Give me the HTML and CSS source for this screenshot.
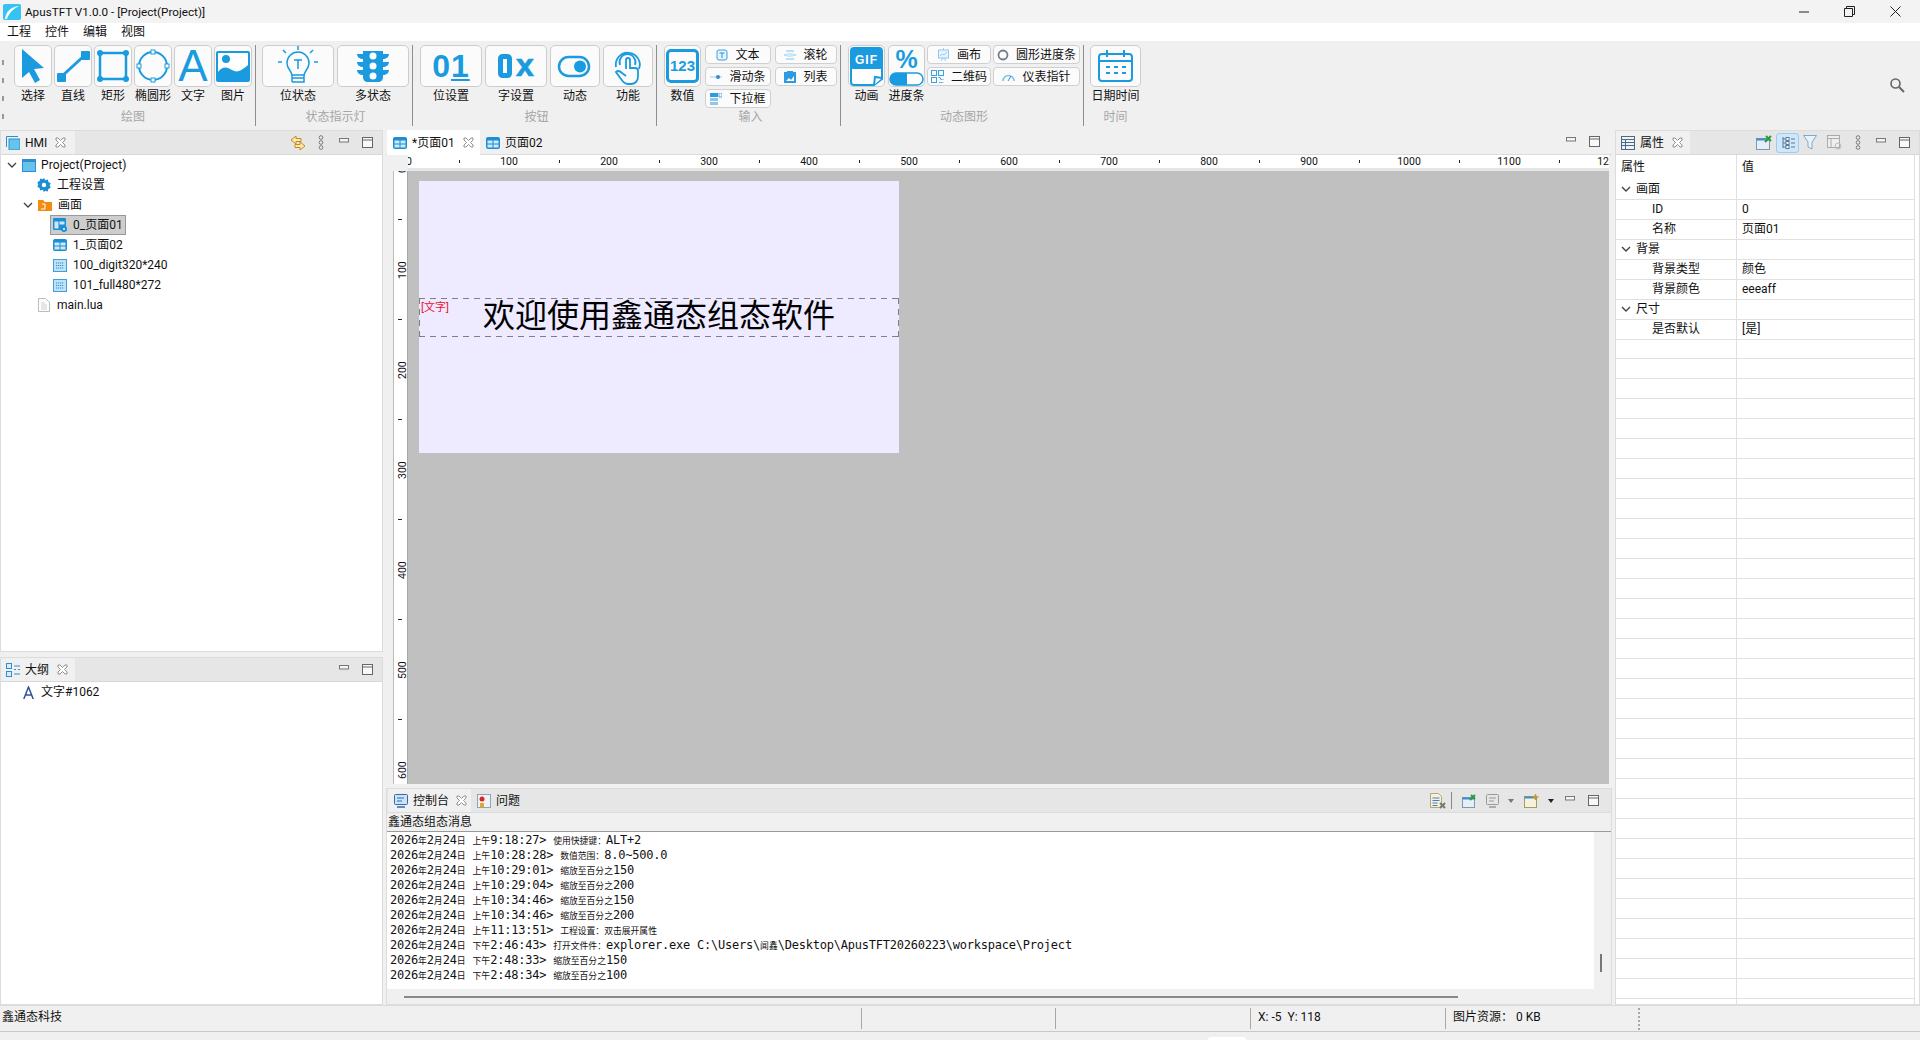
FILE: index.html
```html
<!DOCTYPE html>
<html lang="zh-CN">
<head>
<meta charset="utf-8">
<title>ApusTFT V1.0.0 - [Project(Project)]</title>
<link rel="stylesheet" href="styles.css">
</head>
<body>
<svg class="sprite" width="0" height="0">
  <symbol id="i-page" viewBox="0 0 14 12"><rect x="0" y="0" width="14" height="12" rx="2" fill="#1a8fd6"/><rect x="1.5" y="3.5" width="5" height="3" fill="#cfe8f8"/><rect x="7.5" y="3.5" width="5" height="3" fill="#cfe8f8"/><rect x="1.5" y="7.5" width="5" height="3" fill="#cfe8f8"/><rect x="7.5" y="7.5" width="5" height="3" fill="#cfe8f8"/></symbol>
  <symbol id="i-grid" viewBox="0 0 14 13"><rect x=".5" y=".5" width="13" height="12" fill="#bfe2f6" stroke="#3aa0e0"/><path d="M3 4h8M3 6.5h8M3 9h8" stroke="#2d8fd0" stroke-dasharray="1.2 .8"/></symbol>
  <symbol id="i-close" viewBox="0 0 11 11"><path d="M1 1h2l2.5 2.5L8 1h2v2L7.5 5.5 10 8v2H8L5.500 7.500 3 10H1V8l2.500-2.500L1 3z" fill="#fff" stroke="#909090"/></symbol>
  <symbol id="i-min" viewBox="0 0 10 5"><rect x=".5" y=".5" width="9" height="3.500" fill="#f4f4f4" stroke="#777"/></symbol>
  <symbol id="i-max" viewBox="0 0 11 11"><rect x=".5" y=".5" width="10" height="10" fill="#f8f8f8" stroke="#666"/><path d="M0 3h11" stroke="#666"/></symbol>
  <symbol id="i-dots" viewBox="0 0 6 15"><circle cx="3" cy="2.500" r="1.800" fill="#eee" stroke="#777"/><circle cx="3" cy="7.500" r="1.800" fill="#eee" stroke="#777"/><circle cx="3" cy="12.500" r="1.800" fill="#eee" stroke="#777"/></symbol>
  <symbol id="i-chev" viewBox="0 0 10 6"><path d="M1 1l4 4 4-4" fill="none" stroke="#444" stroke-width="1.400"/></symbol>
</svg>

<div class="titlebar">
  <svg class="applogo" width="18" height="16" viewBox="0 0 18 16"><rect width="18" height="16" rx="2" fill="#35c3f3"/><path d="M2 15C3 8 7 3 16 2 10 5 6 9 4 15z" fill="#fff"/></svg>
  <span class="apptitle">ApusTFT V1.0.0 - [Project(Project)]</span>
  <div class="winctl">
    <svg width="10" height="10" viewBox="0 0 10 10"><path d="M0 5h10" stroke="#222"/></svg>
    <svg width="11" height="11" viewBox="0 0 11 11"><path d="M.5 2.500h8v8h-8zM2.500 2.500v-2h8v8h-2" fill="none" stroke="#222"/></svg>
    <svg width="11" height="11" viewBox="0 0 11 11"><path d="M.5.5l10 10M10.500.5l-10 10" stroke="#222"/></svg>
  </div>
</div>

<div class="menubar"><span>工程</span><span>控件</span><span>编辑</span><span>视图</span></div>

<div class="toolbar">
  <div class="grip"><i></i><i></i><i></i><i></i></div>

  <section class="grp g1">
    <div class="items">
      <div class="tool w38"><div class="tbtn"><svg width="38" height="42" viewBox="0 0 38 42"><path d="M8 4V33l7-6 6 11 5-3-6-11 10-1z" fill="#1a9be0"/></svg></div><span>选择</span></div>
      <div class="tool w38"><div class="tbtn"><svg width="38" height="42" viewBox="0 0 38 42"><path d="M7 32L31 10" stroke="#1a9be0" stroke-width="3"/><rect x="3" y="28" width="9" height="9" rx="1" fill="#1a9be0"/><rect x="27" y="6" width="9" height="9" rx="1" fill="#1a9be0"/></svg></div><span>直线</span></div>
      <div class="tool w38"><div class="tbtn"><svg width="38" height="42" viewBox="0 0 38 42"><rect x="6" y="8" width="26" height="26" fill="none" stroke="#1a9be0" stroke-width="2.500"/><g fill="#1a9be0"><circle cx="6" cy="8" r="3"/><circle cx="32" cy="8" r="3"/><circle cx="6" cy="34" r="3"/><circle cx="32" cy="34" r="3"/></g></svg></div><span>矩形</span></div>
      <div class="tool w38"><div class="tbtn"><svg width="38" height="42" viewBox="0 0 38 42"><ellipse cx="19" cy="21" rx="14" ry="14" fill="none" stroke="#1a9be0" stroke-width="2"/><g fill="#fff" stroke="#1a9be0"><rect x="17" y="5" width="4" height="4"/><rect x="17" y="33" width="4" height="4"/><rect x="3" y="19" width="4" height="4"/><rect x="31" y="19" width="4" height="4"/></g></svg></div><span>椭圆形</span></div>
      <div class="tool w38"><div class="tbtn glyph big-a">A</div><span>文字</span></div>
      <div class="tool w38"><div class="tbtn"><svg width="38" height="42" viewBox="0 0 38 42"><rect x="2" y="6" width="34" height="31" rx="2" fill="#1a9be0"/><rect x="4" y="8" width="30" height="22" fill="#fff"/><circle cx="12" cy="14" r="4" fill="#1a9be0"/><path d="M4 27c5-6 9-5 14-2s9 1 16-5v12H4z" fill="#1a9be0"/></svg></div><span>图片</span></div>
    </div>
    <div class="glabel">绘图</div>
  </section>

  <section class="grp">
    <div class="items gap3">
      <div class="tool w72"><div class="tbtn"><svg width="72" height="42" viewBox="0 0 72 42"><g fill="none" stroke="#1a9be0" stroke-width="1.500"><path d="M30 30c-1-5-5-6-5-12a11 11 0 0 1 22 0c0 6-4 7-5 12z"/><path d="M30 33h12M30 37h12v-7M30 37v-7"/><path d="M32 15h8M36 15v9"/><path d="M36 1v4M21 5l3 3M51 5l-3 3M16 17h4M52 17h4"/></g></svg></div><span>位状态</span></div>
      <div class="tool w72"><div class="tbtn"><svg width="72" height="42" viewBox="0 0 72 42"><path d="M26 6h20v3h6c0 3-3 5-6 5v3h6c0 3-3 5-6 5v3h6c0 3-3 5-6 5v2c0 3-2 5-5 5H31c-3 0-5-2-5-5v-2c-3 0-6-2-6-5h6v-3c-3 0-6-2-6-5h6v-3c-3 0-6-2-6-5h6z" fill="#1a9be0"/><g fill="#fff"><circle cx="36" cy="11" r="3.500"/><circle cx="36" cy="21" r="3.500"/><circle cx="36" cy="31" r="3.500"/></g></svg></div><span>多状态</span></div>
    </div>
    <div class="glabel">状态指示灯</div>
  </section>

  <section class="grp">
    <div class="items gap3">
      <div class="tool w62"><div class="tbtn glyph bits">0<u>1</u></div><span>位设置</span></div>
      <div class="tool w62"><div class="tbtn glyph hex"><svg width="14" height="24" viewBox="0 0 14 24"><rect x="2.500" y="2.500" width="9" height="19" rx="2" fill="none" stroke="#1a9be0" stroke-width="5"/></svg><b>x</b></div><span>字设置</span></div>
      <div class="tool w50"><div class="tbtn"><svg width="50" height="42" viewBox="0 0 50 42"><rect x="9" y="12" width="30" height="19" rx="9.500" fill="none" stroke="#1a9be0" stroke-width="2.500"/><circle cx="30" cy="21.500" r="6" fill="#1a9be0"/></svg></div><span>动态</span></div>
      <div class="tool w50"><div class="tbtn"><svg width="50" height="42" viewBox="0 0 50 42"><g fill="none" stroke="#1a9be0" stroke-width="1.800"><path d="M13 22a12 12 0 1 1 23 2"/><path d="M17 20a8 8 0 1 1 15 0"/><path d="M23 24v-9a2 2 0 0 1 4 0v8h5a3 3 0 0 1 3 3v6c0 4-3 7-7 7h-3c-3 0-5-2-7-5l-5-7c2-2 4-1 6 1l4 3"/></g></svg></div><span>功能</span></div>
    </div>
    <div class="glabel">按钮</div>
  </section>

  <section class="grp">
    <div class="items gap4">
      <div class="tool w37"><div class="tbtn glyph num"><b>123</b></div><span>数值</span></div>
      <div class="scol w66">
        <div class="sbtn"><svg width="12" height="12" viewBox="0 0 12 12"><rect x="1" y="1" width="10" height="10" rx="2" fill="#e4f3fc" stroke="#3aa0e0"/><path d="M3.500 4h5M6 4v5" stroke="#2d8fd0"/></svg><span>文本</span></div>
        <div class="sbtn"><svg width="12" height="12" viewBox="0 0 12 12"><path d="M0 6h12" stroke="#9ccdec"/><circle cx="8" cy="6" r="2" fill="#2d8fd0"/></svg><span>滑动条</span></div>
        <div class="sbtn"><svg width="12" height="12" viewBox="0 0 12 12"><rect x="0" y="0" width="8" height="4" fill="#2d9be0"/><rect x="9" y="0" width="3" height="4" fill="none" stroke="#2d9be0" stroke-width=".8"/><rect x="0" y="5" width="8" height="3" fill="#8cc8ec"/><rect x="0" y="9" width="8" height="3" fill="#8cc8ec"/></svg><span>下拉框</span></div>
      </div>
      <div class="scol w62s">
        <div class="sbtn"><svg width="12" height="12" viewBox="0 0 12 12"><path d="M0 6h12M2 2h8M2 10h8" stroke="#7fc2ea"/><rect x="3" y="4" width="6" height="4" fill="#cfe8f8"/></svg><span>滚轮</span></div>
        <div class="sbtn"><svg width="12" height="12" viewBox="0 0 12 12"><rect x="0" y="1" width="12" height="11" fill="#2d9be0"/><path d="M2 10l3-3 2 2 3-4v5z" fill="#fff"/><rect x="3" y="0" width="6" height="1" fill="#2d9be0"/></svg><span>列表</span></div>
      </div>
    </div>
    <div class="glabel">输入</div>
  </section>

  <section class="grp g5">
    <div class="items gap2b">
      <div class="tool w37"><div class="tbtn"><svg width="37" height="42" viewBox="0 0 37 42"><path d="M3 6a3 3 0 0 1 3-3h25a3 3 0 0 1 3 3v28l-8 6H6a3 3 0 0 1-3-3z" fill="#fff" stroke="#1a9be0" stroke-width="2"/><rect x="3" y="4" width="31" height="20" rx="2" fill="#1a9be0"/><text class="giftxt" x="18.500" y="19" text-anchor="middle">GIF</text><path d="M26 40l1-8 7 1" fill="#fff" stroke="#1a9be0" stroke-width="2"/></svg></div><span>动画</span></div>
      <div class="tool w37 pushed"><div class="tbtn pct"><b>%</b><svg width="35" height="14" viewBox="0 0 35 14"><rect x="1" y="1" width="33" height="12" rx="6" fill="#fff" stroke="#1a9be0" stroke-width="1.500"/><path d="M7 1h11v12H7a6 6 0 0 1 0-12z" fill="#1a9be0"/></svg></div><span>进度条</span></div>
      <div class="scol w64">
        <div class="sbtn"><svg width="13" height="13" viewBox="0 0 13 13"><rect x="1.500" y="2" width="10" height="8" fill="#e8f4fb" stroke="#8cc8ec"/><path d="M3 8l2-2 2 1 3-3M6.500 0v2M4 13l2-3M9 13l-2-3" fill="none" stroke="#7fc2ea" stroke-width=".8"/></svg><span>画布</span></div>
        <div class="sbtn"><svg width="13" height="13" viewBox="0 0 13 13"><g fill="none" stroke="#3aa0e0"><rect x=".5" y=".5" width="5" height="5"/><rect x="7.500" y=".5" width="5" height="5"/><rect x=".5" y="7.500" width="5" height="5"/><path d="M7.500 7.500h2v2h3M8 12.500h4.500" stroke-dasharray="1.500 .6"/></g></svg><span>二维码</span></div>
      </div>
      <div class="scol w87">
        <div class="sbtn"><svg width="12" height="12" viewBox="0 0 12 12"><circle cx="6" cy="6" r="4.500" fill="none" stroke="#6f7c8a" stroke-width="1.800"/></svg><span>圆形进度条</span></div>
        <div class="sbtn"><svg width="13" height="12" viewBox="0 0 13 12"><path d="M1 10a5.500 5.500 0 0 1 11 0" fill="none" stroke="#7fc2ea" stroke-width="1.500"/><path d="M6 10l3-5" stroke="#2d8fd0"/></svg><span>仪表指针</span></div>
      </div>
    </div>
    <div class="glabel">动态图形</div>
  </section>

  <section class="grp last">
    <div class="items">
      <div class="tool w51"><div class="tbtn"><svg width="51" height="42" viewBox="0 0 51 42"><rect x="9" y="9" width="33" height="27" rx="3" fill="none" stroke="#1a9be0" stroke-width="2"/><path d="M9 16h33M17 5v7M34 5v7" stroke="#1a9be0" stroke-width="2"/><path d="M16 22h4M24 22h4M32 22h4M16 28h4M24 28h4M32 28h4" stroke="#1a9be0" stroke-width="2.200"/></svg></div><span>日期时间</span></div>
    </div>
    <div class="glabel">时间</div>
  </section>

  <svg class="search" width="16" height="16" viewBox="0 0 16 16"><circle cx="6.500" cy="6.500" r="4.500" fill="none" stroke="#666" stroke-width="1.600"/><path d="M10 10l5 5" stroke="#666" stroke-width="2"/></svg>
</div>

<main class="work">
  <div class="col">
    <section class="panel hmi">
      <header class="phead">
        <div class="ptab"><svg width="14" height="14" viewBox="0 0 14 14"><path d="M.5 11V.5H12" fill="none" stroke="#2d8fd0"/><rect x="3" y="3" width="11" height="11" fill="#66c3ec" stroke="#2d8fd0"/></svg><span>HMI</span><svg class="x" width="11" height="11"><use href="#i-close"/></svg></div>
        <div class="ptools">
          <svg width="16" height="16" viewBox="0 0 16 16"><path d="M6 1L1 5l5 4V6.500h5v-3H6zM10 7l5 4-5 4v-2.500H5v-3h5z" fill="#fbe9b0" stroke="#c98a1a"/></svg>
          <svg class="t-dots" width="6" height="15"><use href="#i-dots"/></svg>
          <svg class="t-min" width="10" height="5"><use href="#i-min"/></svg>
          <svg class="t-max" width="11" height="11"><use href="#i-max"/></svg>
        </div>
      </header>
      <div class="pbody tree">
        <div class="tr l0"><svg class="chev" width="10" height="6"><use href="#i-chev"/></svg><svg width="14" height="13" viewBox="0 0 14 13"><rect x=".5" y=".5" width="13" height="12" fill="#66c3ec" stroke="#2d8fd0"/><path d="M0 2h14" stroke="#2d8fd0" stroke-width="2"/></svg><span>Project(Project)</span></div>
        <div class="tr l1"><svg width="14" height="14" viewBox="0 0 14 14"><path d="M7 0l1.300 2.200 2.500-.6.600 2.500 2.300 1.100-1 2.300 1 2.300-2.300 1.100-.6 2.500-2.500-.6L7 14l-1.300-2.200-2.500.6-.6-2.500L.3 8.800l1-2.300-1-2.300 2.300-1.100.6-2.500 2.500.6z" fill="#1a8fd6"/><circle cx="7" cy="7" r="2.200" fill="#fff"/></svg><span>工程设置</span></div>
        <div class="tr l1b"><svg class="chev" width="10" height="6"><use href="#i-chev"/></svg><svg width="14" height="12" viewBox="0 0 14 12"><path d="M0 1h5l2 2h7v9H0z" fill="#f28c0f"/><path d="M4 5h3v5H3" fill="none" stroke="#fff"/></svg><span>画面</span></div>
        <div class="tr l2 sel"><svg width="14" height="14" viewBox="0 0 14 14"><rect width="13" height="12" rx="1" fill="#1a8fd6"/><rect x="1.500" y="3.500" width="4" height="7" fill="#cfe8f8"/><rect x="6.500" y="3.500" width="5" height="3" fill="#cfe8f8"/><circle cx="11" cy="11" r="3" fill="#1a8fd6"/><circle cx="11" cy="11" r="1" fill="#fff"/></svg><span>0_页面01</span></div>
        <div class="tr l2"><svg width="14" height="12"><use href="#i-page"/></svg><span>1_页面02</span></div>
        <div class="tr l2"><svg width="14" height="13"><use href="#i-grid"/></svg><span>100_digit320*240</span></div>
        <div class="tr l2"><svg width="14" height="13"><use href="#i-grid"/></svg><span>101_full480*272</span></div>
        <div class="tr l1c"><svg width="12" height="14" viewBox="0 0 12 14"><path d="M.5.5h7l4 4v9H.5z" fill="#fff" stroke="#bbb"/><path d="M3 5h4M3 7h6M3 9h6M3 11h6" stroke="#ccc"/></svg><span>main.lua</span></div>
      </div>
    </section>
    <section class="panel outline">
      <header class="phead">
        <div class="ptab"><svg width="14" height="14" viewBox="0 0 14 14"><g fill="#d8ecf8" stroke="#2d8fd0"><rect x=".5" y=".5" width="5" height="5"/><rect x=".5" y="8.500" width="5" height="5"/></g><path d="M8 3h6M8 6.500h2M12 6.500h2M8 11h6" stroke="#2d8fd0"/></svg><span>大纲</span><svg class="x" width="11" height="11"><use href="#i-close"/></svg></div>
        <div class="ptools">
          <svg class="t-min" width="10" height="5"><use href="#i-min"/></svg>
          <svg class="t-max" width="11" height="11"><use href="#i-max"/></svg>
        </div>
      </header>
      <div class="pbody">
        <div class="tr oline"><svg width="11" height="13" viewBox="0 0 11 13"><path d="M.8 13L5.500 1l4.700 12M2.500 9h6" fill="none" stroke="#34509a" stroke-width="1.500"/></svg><span>文字#1062</span></div>
      </div>
    </section>
  </div>

  <div class="col mid">
    <section class="editor">
      <header class="ehead">
        <div class="etab on"><svg width="14" height="12"><use href="#i-page"/></svg><span>*页面01</span><svg class="x" width="11" height="11"><use href="#i-close"/></svg></div>
        <div class="etab"><svg width="14" height="12"><use href="#i-page"/></svg><span>页面02</span></div>
        <div class="ptools etools">
          <svg class="t-min" width="10" height="5"><use href="#i-min"/></svg>
          <svg class="t-max" width="11" height="11"><use href="#i-max"/></svg>
        </div>
      </header>
      <div class="stage">
        <div class="corner"></div>
        <div class="hruler">
          <b>0</b><b>100</b><b>200</b><b>300</b><b>400</b><b>500</b><b>600</b><b>700</b><b>800</b><b>900</b><b>1000</b><b>1100</b><b>1200</b>
        </div>
        <div class="vruler">
          <b>0</b><b>100</b><b>200</b><b>300</b><b>400</b><b>500</b><b>600</b>
        </div>
        <div class="canvas">
          <div class="screen">
            <div class="textbox">
              <span class="tag">[文字]</span>
              <span class="welcome">欢迎使用鑫通态组态软件</span>
            </div>
          </div>
        </div>
      </div>
    </section>

    <section class="console">
      <header class="chead">
        <div class="ctab on"><svg width="14" height="14" viewBox="0 0 14 14"><rect x=".5" y=".5" width="13" height="10" rx="1" fill="#cfe3f5" stroke="#2a6db5"/><path d="M3 4h7M3 7h5" stroke="#2a6db5"/><path d="M3 13h8" stroke="#2a6db5" stroke-width="1.500"/></svg><span>控制台</span><svg class="x" width="11" height="11"><use href="#i-close"/></svg></div>
        <div class="ctab"><svg width="14" height="14" viewBox="0 0 14 14"><rect x=".5" y=".5" width="13" height="13" fill="#eef3f8" stroke="#8fa3b5"/><circle cx="5" cy="5" r="2.500" fill="#d9262c"/><rect x="3" y="9" width="4" height="4" fill="#e8a820"/></svg><span>问题</span></div>
        <div class="ctools">
          <svg width="16" height="16" viewBox="0 0 16 16"><path d="M.5.5h8l3 3v11H.5z" fill="#f4f0dc" stroke="#b5a878"/><path d="M2.500 5h7M2.500 7.500h7M2.500 10h5M2.500 12.500h5" stroke="#4a7cc0"/><path d="M10 10l5 5M15 10l-5 5" stroke="#777" stroke-width="2"/></svg>
          <i class="csep"></i>
          <svg class="c-pin" width="14" height="14" viewBox="0 0 14 14"><rect x=".5" y="3.500" width="12" height="10" fill="#e4eff8" stroke="#7f98ad"/><path d="M.5 3.500h12v2H.5z" fill="#3f8fd0"/><path d="M8 6l5-5M9 1l4 4" stroke="#2e9b3c" stroke-width="2"/></svg>
          <svg class="c-mon" width="13" height="14" viewBox="0 0 13 14"><rect x=".5" y=".5" width="12" height="10" rx="1" fill="#e6e6e6" stroke="#999"/><path d="M3 4h7M3 7h5" stroke="#999"/><path d="M3 13h7" stroke="#999" stroke-width="1.500"/></svg>
          <i class="tri gray"></i>
          <svg class="c-new" width="15" height="14" viewBox="0 0 15 14"><rect x=".5" y="2.500" width="12" height="11" fill="#f6f1dc" stroke="#a99a62"/><path d="M.5 2.500h12v2H.5z" fill="#3f8fd0"/><path d="M11.500 0v6M8.500 3h6" stroke="#c49a2a" stroke-width="1.500"/></svg>
          <i class="tri"></i>
          <svg class="t-min" width="10" height="5"><use href="#i-min"/></svg>
          <svg class="t-max" width="11" height="11"><use href="#i-max"/></svg>
        </div>
      </header>
      <div class="ctitle">鑫通态组态消息</div>
      <div class="clog">
        <div>2026<s>年</s>2<s>月</s>24<s>日</s> <s>上午</s>9:18:27&gt; <s>使用快捷键：</s>ALT+2</div>
        <div>2026<s>年</s>2<s>月</s>24<s>日</s> <s>上午</s>10:28:28&gt; <s>数值范围：</s>8.0~500.0</div>
        <div>2026<s>年</s>2<s>月</s>24<s>日</s> <s>上午</s>10:29:01&gt; <s>缩放至百分之</s>150</div>
        <div>2026<s>年</s>2<s>月</s>24<s>日</s> <s>上午</s>10:29:04&gt; <s>缩放至百分之</s>200</div>
        <div>2026<s>年</s>2<s>月</s>24<s>日</s> <s>上午</s>10:34:46&gt; <s>缩放至百分之</s>150</div>
        <div>2026<s>年</s>2<s>月</s>24<s>日</s> <s>上午</s>10:34:46&gt; <s>缩放至百分之</s>200</div>
        <div>2026<s>年</s>2<s>月</s>24<s>日</s> <s>上午</s>11:13:51&gt; <s>工程设置：双击展开属性</s></div>
        <div>2026<s>年</s>2<s>月</s>24<s>日</s> <s>下午</s>2:46:43&gt; <s>打开文件件：</s>explorer.exe C:\Users\<s>闻鑫</s>\Desktop\ApusTFT20260223\workspace\Project</div>
        <div>2026<s>年</s>2<s>月</s>24<s>日</s> <s>下午</s>2:48:33&gt; <s>缩放至百分之</s>150</div>
        <div>2026<s>年</s>2<s>月</s>24<s>日</s> <s>下午</s>2:48:34&gt; <s>缩放至百分之</s>100</div>
        <i class="vthumb"></i>
      </div>
      <div class="hthumb"><i></i></div>
    </section>
  </div>

  <section class="panel props">
    <header class="phead">
      <div class="ptab"><svg width="14" height="14" viewBox="0 0 14 14"><rect x=".5" y=".5" width="13" height="13" fill="#eef3f8" stroke="#4d6a85"/><path d="M.5 3.500h13M.5 6.500h13M.5 9.500h13M4.500 3.500v10" stroke="#4d6a85"/></svg><span>属性</span><svg class="x" width="11" height="11"><use href="#i-close"/></svg></div>
      <div class="ptools rtools">
        <svg width="16" height="15" viewBox="0 0 16 15"><rect x=".5" y="3.500" width="13" height="11" fill="#e4eff8" stroke="#7f98ad"/><path d="M.5 3.500h13v2H.5z" fill="#3f8fd0"/><path d="M9 7l6-6M10 1l5 5" stroke="#2e9b3c" stroke-width="2"/></svg>
        <span class="toggled"><svg width="14" height="14" viewBox="0 0 14 14"><path d="M2 1v11M2 3h3M2 7h3M2 11h3" stroke="#5b7c98" fill="none"/><rect x="5" y="1.500" width="3" height="3" fill="#fff" stroke="#5b7c98"/><rect x="5" y="5.500" width="3" height="3" fill="#fff" stroke="#5b7c98"/><rect x="5" y="9.500" width="3" height="3" fill="#fff" stroke="#5b7c98"/><path d="M10 3h4M10 7h4M10 11h4" stroke="#5b7c98"/></svg></span>
        <svg class="t-filter" width="14" height="15" viewBox="0 0 14 15"><path d="M.5.500h13L9 7v7l-4-2V7z" fill="#e8f4fb" stroke="#7fa9c8"/></svg>
        <svg class="t-dis" width="15" height="15" viewBox="0 0 15 15"><rect x=".5" y=".5" width="12" height="12" fill="#eee" stroke="#aaa"/><path d="M.5 3.500h12M4 3.500v9" stroke="#aaa"/><circle cx="11" cy="11" r="3" fill="none" stroke="#bbb"/></svg>
        <svg class="t-dots" width="6" height="15"><use href="#i-dots"/></svg>
        <svg class="t-min" width="10" height="5"><use href="#i-min"/></svg>
        <svg class="t-max" width="11" height="11"><use href="#i-max"/></svg>
      </div>
    </header>
    <div class="ptable">
      <div class="prow phdr"><div>属性</div><div>值</div></div>
      <div class="prow grouprow"><div><svg width="10" height="6"><use href="#i-chev"/></svg>画面</div><div></div></div>
      <div class="prow"><div class="ind">ID</div><div>0</div></div>
      <div class="prow"><div class="ind">名称</div><div>页面01</div></div>
      <div class="prow grouprow"><div><svg width="10" height="6"><use href="#i-chev"/></svg>背景</div><div></div></div>
      <div class="prow"><div class="ind">背景类型</div><div>颜色</div></div>
      <div class="prow"><div class="ind">背景颜色</div><div>eeeaff</div></div>
      <div class="prow grouprow"><div><svg width="10" height="6"><use href="#i-chev"/></svg>尺寸</div><div></div></div>
      <div class="prow"><div class="ind">是否默认</div><div>[是]</div></div>
      <div class="pfill"></div>
    </div>
  </section>
</main>

<footer class="status">
  <div class="st s1">鑫通态科技</div>
  <div class="st s2"></div>
  <div class="st s3"></div>
  <div class="st s4">X: -5&nbsp; Y: 118</div>
  <div class="st s5">图片资源：&nbsp;0 KB</div>
  <div class="stgrip"></div>
</footer>
<div class="strip"><i></i></div>
</body>
</html>
```
FILE: styles.css
```css
* { box-sizing: border-box; }
html { height: 1040px; overflow: hidden; }
html, body { margin: 0; padding: 0; }
body {
  width: 1920px; height: 1040px; overflow: hidden;
  background: #f0f0f0; color: #111;
  font: 12px/16px Roboto, "Noto Sans CJK SC", sans-serif;
  display: flex; flex-direction: column;
}
svg { display: block; flex: none; }
.sprite { position: absolute; }

/* title + menu */
.titlebar { height: 23px; flex: none; background: #f3f3f3; display: flex; align-items: center; padding-left: 3px; }
.applogo { margin-right: 4px; }
.apptitle { font-size: 11.700px; }
.winctl { margin-left: auto; display: flex; align-items: center; gap: 35px; padding-right: 19px; }
.menubar { height: 18px; flex: none; background: #fff; display: flex; gap: 14px; padding: 0 0 0 7px; align-items: center; }

/* toolbar */
.toolbar { height: 86px; flex: none; background: #f0f0f0; display: flex; padding-top: 4px; }
.grip { width: 14px; flex: none; padding: 15px 0 0 2px; display: flex; flex-direction: column; gap: 13px; }
.grip i { display: block; width: 1.500px; height: 5px; background: #999; }
.grp { display: flex; flex-direction: column; height: 81px; padding-right: 3px; margin-right: 7px; border-right: 1px solid #8e8e8e; }
.grp.g1, .grp.g5 { margin-right: 6px; }
.grp.last { border-right: 0; }
.items { display: flex; gap: 2px; height: 63px; }
.items.gap3 { gap: 3px; }
.items.gap4 { gap: 4px; }
.items.gap2b { gap: 2px; }
.pushed { margin-left: 1px; }
.tool { display: flex; flex-direction: column; align-items: center; font-size: 12px; }
.tool > span { line-height: 19px; white-space: nowrap; }
.tbtn { width: 100%; height: 42px; background: #fbfbfb; border: 1px solid #cdcdcd; border-radius: 5px; flex: none; display: flex; align-items: center; justify-content: center; }
.tbtn > svg { margin: -1px; }
.w38 { width: 38px; } .w72 { width: 72px; } .w62 { width: 62px; } .w50 { width: 50px; }
.w37 { width: 37px; } .w51 { width: 51px; } .w66 { width: 66px; } .w62s { width: 62px; }
.w64 { width: 64px; } .w87 { width: 87px; }
.glyph { color: #1a9be0; font-family: "Liberation Sans", sans-serif; }
.big-a { font-size: 44px; line-height: 40px; }
.bits { font-size: 32px; line-height: 38px; letter-spacing: 1px; font-weight: 700; }
.bits u { text-decoration-thickness: 2px; text-underline-offset: 2px; }
.hex { gap: 4px; }
.hex b { font-size: 32px; line-height: 30px; margin-top: -2px; -webkit-text-stroke: .7px #1a9be0; }
.hex > svg { margin: 0; }
.num b { display: block; width: 33px; height: 34px; border: 3px solid #1a9be0; border-radius: 5px; font-size: 15px; line-height: 28px; text-align: center; }
.pct { flex-direction: column; justify-content: flex-end; color: #1a9be0; font-family: "Liberation Sans", sans-serif; padding-bottom: 1px; }
.pct b { font-size: 25px; line-height: 27px; }
.giftxt { font: 700 12px "Liberation Sans", sans-serif; fill: #fff; letter-spacing: 1px; }
.scol { display: flex; flex-direction: column; gap: 3px; }
.sbtn { height: 19px; background: #fbfbfb; border: 1px solid #d0d0d0; border-radius: 4px; display: flex; align-items: center; justify-content: center; gap: 7px; font-size: 12px; white-space: nowrap; }
.glabel { text-align: center; color: #a6a6a6; line-height: 18px; height: 18px; }
.search { margin: 32px 15px 0 auto; }

/* work area */
.work { flex: 1; min-height: 0; display: grid; grid-template-columns: 383px 1226px 305px; column-gap: 3px; padding-top: 3px; overflow: hidden; }
.col { display: flex; flex-direction: column; gap: 5px; min-height: 0; }
.col.mid { gap: 4px; }
.panel { border: 1px solid #dcdcdc; background: #fff; display: flex; flex-direction: column; min-height: 0; }
.hmi { height: 522px; flex: none; }
.outline { flex: 1; }
.phead { height: 24px; flex: none; background: #e6e6e6; display: flex; border-bottom: 1px solid #d8d8d8; }
.ptab { width: 74px; background: #f0f0f0; display: flex; align-items: center; gap: 5px; padding-left: 5px; }
.ptab .x { margin-left: 3px; }
.ptools { margin-left: auto; display: flex; align-items: center; padding-right: 9px; }
.t-dots { margin-left: 12px; }
.t-min { margin: -5px 0 0 15px; }
.t-max { margin: -1px 0 0 13px; }
.pbody { flex: 1; background: #fff; }

/* tree */
.tr { height: 20px; display: flex; align-items: center; gap: 6px; white-space: nowrap; }
.l0 { padding-left: 6px; }
.l0 .chev { margin-right: -1px; }
.l0 span { margin-left: -1px; letter-spacing: .1px; }
.l1 { padding-left: 36px; }
.l1b { padding-left: 22px; }
.l1b .chev { margin-right: -1px; }
.l2 { margin-left: 49px; padding-left: 3px; }
.sel { width: 76px; background: #cdcdcd; border: 1px solid #999; padding-left: 2px; }
.l1c { padding-left: 37px; gap: 7px; }
.oline { padding-left: 22px; gap: 7px; }

/* editor */
.editor { height: 654px; flex: none; display: flex; flex-direction: column; }
.ehead { height: 25px; flex: none; background: #f0f0f0; display: flex; border-bottom: 1px solid #dcdcdc; }
.etab { display: flex; align-items: center; gap: 5px; padding-left: 6px; width: 93px; height: 25px; }
.etab.on { background: #fff; margin-left: 1px; }
.etab.on .x { margin-left: 3px; }
.etools { padding-right: 12px; }
.stage { flex: 1; min-height: 0; display: grid; grid-template-columns: 22px 1201px; grid-template-rows: 16px 613px; background: #f0f0f0; }
.corner { background: #f0f0f0; }
.hruler { display: flex; overflow: hidden; background: linear-gradient(#fff, #fff) 0 0 / 100% 13px no-repeat, #e6e6e6; }
.hruler b { flex: none; width: 100px; font-weight: 400; font-size: 10.500px; line-height: 13px; height: 16px; text-align: center; position: relative; }
.hruler b:first-child { margin-left: -49px; }
.hruler b::after { content: ""; position: absolute; left: 0; top: 5px; width: 1px; height: 3px; background: #222; }
.vruler { margin-left: 7px; width: 15px; background: #fff; border-left: 1px solid #bbb; border-right: 1px solid #a8a8a8; overflow: hidden; display: flex; flex-direction: column; }
.vruler b { flex: none; height: 100px; font-weight: 400; font-size: 10.500px; color: #112; writing-mode: vertical-rl; transform: translateX(2px) rotate(180deg); line-height: 13px; text-align: center; position: relative; }
.vruler b:first-child { margin-top: -51px; }
.vruler b::after { content: ""; position: absolute; top: 0; left: 7px; width: 4px; height: 1px; background: #222; }
.canvas { background: #c0c0c0; padding: 10px 0 0 11px; overflow: hidden; }
.screen { width: 480px; height: 272px; background: #eeeaff; padding-top: 117px; }
.textbox {
  height: 39px; position: relative; display: flex; align-items: center; justify-content: center; padding-bottom: 2px;
  background:
    repeating-linear-gradient(90deg, #808080 0 6px, transparent 6px 11px) 0 0 / 100% 1px no-repeat,
    repeating-linear-gradient(90deg, #808080 0 6px, transparent 6px 11px) 0 100% / 100% 1px no-repeat,
    repeating-linear-gradient(180deg, #808080 0 6px, transparent 6px 11px) 0 0 / 1px 100% no-repeat,
    repeating-linear-gradient(180deg, #808080 0 6px, transparent 6px 11px) 100% 0 / 1px 100% no-repeat;
}
.tag { position: absolute; left: 2px; top: 3px; color: #f01030; font-size: 11px; line-height: 14px; }
.welcome { font-size: 32px; line-height: 37px; color: #000; }

/* console */
.console { flex: 1; min-height: 0; border: 1px solid #dcdcdc; background: #f0f0f0; display: flex; flex-direction: column; }
.chead { height: 24px; flex: none; background: #e6e6e6; display: flex; border-bottom: 1px solid #dcdcdc; }
.ctab { display: flex; align-items: center; gap: 5px; padding-left: 6px; width: 80px; }
.ctab.on { background: #f0f0f0; width: 83px; margin-left: 1px; }
.ctab.on .x { margin-left: 2px; }
.ctools { margin-left: auto; display: flex; align-items: center; padding-right: 12px; }
.csep { width: 1px; height: 17px; background: #888; margin-left: 5px; }
.c-pin { margin-left: 10px; }
.c-mon { margin-left: 10px; }
.c-new { margin-left: 10px; }
.tri { width: 0; height: 0; border: 3.500px solid transparent; border-top: 4px solid #222; border-bottom: 0; margin-left: 9px; }
.tri.gray { border-top-color: #777; }
.ctools .t-min { margin: -5px 0 0 11px; }
.ctitle { height: 19px; flex: none; padding-left: 1px; line-height: 19px; border-bottom: 1px solid #9a9a9a; }
.clog { flex: none; height: 157px; margin: 0 17px 0 0; background: #fff; padding: 1px 0 0 3px; font: 12px/15px "DejaVu Sans Mono", "Noto Sans CJK SC", monospace; letter-spacing: -.22px; position: relative; color: #111; }
.clog > div { white-space: pre; height: 15px; }
.clog s { text-decoration: none; font-size: 8.800px; letter-spacing: 0; font-family: "Noto Sans CJK SC", sans-serif; }
.vthumb { position: absolute; left: 1213px; top: 122px; width: 2px; height: 18px; background: #777; }
.hthumb { height: 2px; flex: none; margin-top: 7px; padding-left: 17px; }
.hthumb i { display: block; width: 1054px; height: 2px; background: #888; }

/* properties */
.props { height: 875px; }
.toggled { display: flex; align-items: center; justify-content: center; width: 23px; height: 20px; background: #cfe6fb; border: 1px solid #9ccbf5; border-radius: 3px; margin-left: 4px; }
.t-filter { margin-left: 4px; }
.t-dis { margin-left: 10px; }
.rtools .t-dots { margin-left: 13px; }
.ptable { flex: 1; display: flex; flex-direction: column; background: #fff; min-height: 0; }
.prow { display: grid; grid-template-columns: 121px 178px; height: 20px; flex: none; }
.prow > div { border-bottom: 1px solid #e0e0e0; border-right: 1px solid #e0e0e0; padding-left: 5px; line-height: 20px; white-space: nowrap; }
.prow.phdr { height: 24px; }
.prow.phdr > div { border-bottom: 0; line-height: 24px; }
.prow.grouprow > div:first-child { display: flex; align-items: center; gap: 5px; }
.prow .ind { padding-left: 36px; }
.pfill {
  flex: 1; width: 299px;
  border-right: 1px solid #e0e0e0;
  background:
    linear-gradient(90deg, transparent 120px, #e0e0e0 120px, #e0e0e0 121px, transparent 121px),
    repeating-linear-gradient(180deg, transparent 0 19px, #e0e0e0 19px 20px);
}

/* status */
.status { height: 27px; flex: none; display: flex; align-items: center; border-top: 1px solid #dcdcdc; border-bottom: 1px solid #c8c8c8; }
.st { height: 21px; line-height: 18px; padding-left: 2px; flex: none; white-space: nowrap; }
.st + .st { border-left: 1px solid #a8a8a8; padding-left: 7px; }
.s1 { width: 861px; } .s2 { width: 194px; } .s3 { width: 195px; } .s4 { width: 195px; } .s5 { width: 193px; }
.stgrip { width: 1px; height: 22px; border-left: 2px dotted #a8a8a8; }
.strip { height: 8px; flex: none; padding: 5px 0 0 1208px; }
.strip i { display: block; width: 38px; height: 3px; background: #fff; border-radius: 3px 3px 0 0; }
```
